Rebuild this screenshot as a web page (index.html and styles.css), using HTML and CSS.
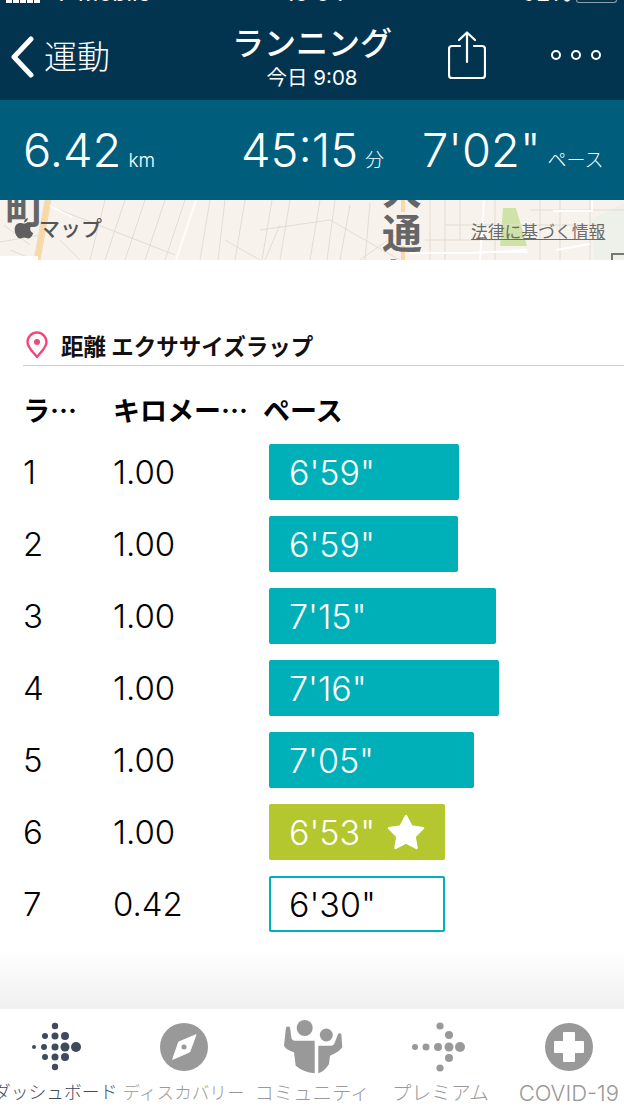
FILE: index.html
```html
<!DOCTYPE html>
<html lang="ja">
<head>
<meta charset="utf-8">
<title>ランニング</title>
<link rel="stylesheet" href="styles.css">
</head>
<body>
<div class="app">
  <header class="top">
    <div class="status">
      <i class="st-signal"></i>
      <span class="st-carrier">T-Mobile</span>
      <span class="st-time">10:04</span>
      <span class="st-batt">92%</span>
      <i class="st-cell"></i>
    </div>
    <div class="nav">
      <div class="back">
        <svg class="chev" width="26" height="44" viewBox="0 0 26 44"><path d="M23 4 L6 22 L23 40" fill="none" stroke="#fff" stroke-width="5" stroke-linecap="round" stroke-linejoin="round"/></svg>
        <span class="back-label">運動</span>
      </div>
      <div class="title">
        <div class="title-main">ランニング</div>
        <div class="title-sub">今日 9:08</div>
      </div>
      <svg class="share" width="38" height="50" viewBox="0 0 38 50"><path d="M12 15 H4 Q1 15 1 18 V44 Q1 47 4 47 H34 Q37 47 37 44 V18 Q37 15 34 15 H26 M19 31 V2 M11 9 L19 1.500 L27 9" fill="none" stroke="#fff" stroke-width="2.200" stroke-linecap="round" stroke-linejoin="round"/></svg>
      <svg class="more" width="52" height="12" viewBox="0 0 52 12"><circle cx="6" cy="6" r="4" fill="none" stroke="#fff" stroke-width="2"/><circle cx="26" cy="6" r="4" fill="none" stroke="#fff" stroke-width="2"/><circle cx="46" cy="6" r="4" fill="none" stroke="#fff" stroke-width="2"/></svg>
    </div>
  </header>

  <section class="stats">
    <div class="stat stat-dist"><span class="num">6.42</span><span class="unit">km</span></div>
    <div class="stat stat-time"><span class="num">45:15</span><span class="unit">分</span></div>
    <div class="stat stat-pace"><span class="num">7'02"</span><span class="unit">ペース</span></div>
  </section>

  <div class="map">
    <svg width="624" height="60" viewBox="0 0 624 60">
      <rect width="624" height="60" fill="#f7f3ec"/>
      <path d="M595 60 L590 20 L624 3 V60 Z" fill="#eef0ea"/>
      <path d="M503 8 H516 L527 46 H500 Z" fill="#cfe3a8"/>
      <g fill="none" stroke="#e2ddd3" stroke-width="1">
        <path d="M0 42 L40 35 M60 10 L175 55 M105 0 L90 60 M125 0 L105 60 M145 0 L125 60 M165 0 L145 60 M185 0 L165 60"/>
        <path d="M210 0 L200 60 M225 0 L218 60 M245 0 L235 60 M260 30 L330 20 L400 60 M272 0 L262 60 M290 0 L280 60 M320 0 L310 60 M335 0 L327 60 M350 5 L340 60 M370 3 L365 60 M395 35 L360 60"/>
        <path d="M430 0 V60 M445 0 V60 M460 0 V40 M495 0 V60 M540 0 V60 M560 0 V60 M590 0 V60 M530 10 H624 M445 25 H600 M425 40 H500"/>
        <path d="M4 25 L30 45 M10 50 L35 60 M60 40 L80 60 M225 40 L260 60 M280 25 L265 60"/>
      </g>
      <path d="M45 0 L34 60 M51 0 L40 60" stroke="#eadbc0" stroke-width="1" fill="none"/>
      <path d="M48 0 L37 60" stroke="#fad8a3" stroke-width="5" fill="none"/>
      <path d="M403 0 V12 M403 46 V60" stroke="#fad8a3" stroke-width="4" fill="none"/>
      <g fill="none" stroke="#fff" stroke-width="1.800">
        <path d="M196 0 L176 60"/>
        <path d="M50 6 L72 17"/>
        <path d="M484 0 L480 60"/>
        <path d="M410 53 H470 L527 50 M480 52 H528"/>
        <path d="M553 11 H592 V0 M556 50 L590 44"/>
      </g>
      <path d="M0 60 V56 H38 V60 Z" fill="#fff"/>
      <path d="M612 60 V54 H624" fill="none" stroke="#777" stroke-width="2"/>
    </svg>
    <span class="map-town">町</span>
    <span class="map-road-a">大</span>
    <span class="map-road-b">通</span>
    <span class="map-road-c">り</span>
    <div class="map-brand">
      <svg width="20" height="22" viewBox="0 0 18 20"><path d="M12.500 1 C12.600 3 11 5 9 5 C9 3 10.500 1.300 12.500 1 Z M9 6 C10.500 6 11.500 5 13 5 C14.800 5 16 6 16.800 7.200 C13.500 9 14.200 13.500 17.500 14.500 C16.500 17 15 19.500 13 19.500 C11.500 19.500 11 18.700 9.300 18.700 C7.600 18.700 7 19.500 5.500 19.500 C3 19.500 .5 15 .5 11.500 C.5 8 2.800 5.500 5.300 5.500 C6.800 5.500 7.800 6 9 6 Z" fill="#5f5f5f"/></svg>
      <span>マップ</span>
    </div>
    <span class="map-legal">法律に基づく情報</span>
  </div>

  <main class="content">
    <h2 class="sec-head">
      <svg class="pin" width="24" height="28" viewBox="0 0 24 28"><path d="M12 26 C8 21 2.500 16.500 2.500 11 A9.500 9.500 0 0 1 21.500 11 C21.500 16.500 16 21 12 26 Z" fill="none" stroke="#f0487a" stroke-width="2.400" stroke-linejoin="round"/><circle cx="12" cy="11" r="3" fill="#f0487a"/></svg>
      <span>距離 エクササイズラップ</span>
    </h2>
    <div class="laps">
      <div class="row row-head"><span class="c1">ラ…</span><span class="c2">キロメー…</span><span class="c3">ペース</span></div>
      <div class="row"><span class="c1">1</span><span class="c2">1.00</span><div class="bar" style="width:190px">6'59"</div></div>
      <div class="row"><span class="c1">2</span><span class="c2">1.00</span><div class="bar" style="width:189px">6'59"</div></div>
      <div class="row"><span class="c1">3</span><span class="c2">1.00</span><div class="bar" style="width:227px">7'15"</div></div>
      <div class="row"><span class="c1">4</span><span class="c2">1.00</span><div class="bar" style="width:230px">7'16"</div></div>
      <div class="row"><span class="c1">5</span><span class="c2">1.00</span><div class="bar" style="width:205px">7'05"</div></div>
      <div class="row"><span class="c1">6</span><span class="c2">1.00</span><div class="bar bar-best" style="width:176px"><span>6'53"</span><svg class="star" width="40" height="38" viewBox="0 0 40 38"><path d="M20 3 L25.500 13.500 L37 15.200 L28.500 23.500 L30.500 35 L20 29.500 L9.500 35 L11.500 23.500 L3 15.200 L14.500 13.500 Z" fill="#fff" stroke="#fff" stroke-width="2.500" stroke-linejoin="round"/></svg></div></div>
      <div class="row"><span class="c1">7</span><span class="c2">0.42</span><div class="bar bar-part" style="width:176px">6'30"</div></div>
    </div>
    <div class="fade"></div>
  </main>

  <nav class="tabs">
    <div class="tab tab-on">
      <svg class="tab-icon" width="60" height="54" viewBox="-5 0 60 54" fill="#3f4a5c">
        <circle cx="25" cy="6" r="3.200"/><circle cx="15" cy="16" r="3"/><circle cx="25" cy="16" r="3.500"/><circle cx="35" cy="16" r="4"/><circle cx="4" cy="27" r="2"/><circle cx="14" cy="27" r="3"/><circle cx="25" cy="27" r="3.500"/><circle cx="35" cy="27" r="4.500"/><circle cx="46" cy="27" r="5"/><circle cx="15" cy="37" r="3"/><circle cx="25" cy="37" r="3.500"/><circle cx="35" cy="37" r="4"/><circle cx="25" cy="47" r="3.200"/>
      </svg>
      <span class="lbl-dash">ダッシュボード</span>
    </div>
    <div class="tab">
      <svg class="tab-icon" width="60" height="54" viewBox="0 0 60 54"><circle cx="30" cy="27" r="24" fill="#999"/><path d="M42 14.700 L24.700 22 L18.700 39.300 L35.700 32 Z" fill="#fff" stroke="#fff" stroke-width="1" stroke-linejoin="round"/><circle cx="30" cy="27" r="2.500" fill="#999"/></svg>
      <span class="lbl-disc">ディスカバリー</span>
    </div>
    <div class="tab">
      <svg class="tab-icon" width="62" height="54" viewBox="0 0 62 54" fill="#999">
        <circle cx="23.700" cy="8" r="8"/><circle cx="45.300" cy="15" r="6.500"/>
        <path d="M5 7.300 Q7 5.500 9 7.300 L10.300 17.300 Q10.800 20.700 14 20.700 H33.700 V53.300 Q22 52 14.700 45.700 L13 32.300 Q5 30 3 25.700 Z"/>
        <path d="M37.300 25.700 H50 Q53 25.700 54 22 L57 14 Q58.800 12.500 60.300 14 L61.300 27.300 Q57 33 49 35.700 L48 44 Q44 51 37.300 53.300 Z"/>
      </svg>
      <span class="lbl-comm">コミュニティ</span>
    </div>
    <div class="tab">
      <svg class="tab-icon" width="60" height="54" viewBox="1 0 60 54" fill="#999">
        <circle cx="31" cy="6" r="3.600"/><circle cx="40" cy="15" r="4"/><circle cx="6" cy="27" r="3"/><circle cx="17" cy="27" r="3.500"/><circle cx="29" cy="27" r="4"/><circle cx="40" cy="27" r="4.500"/><circle cx="51" cy="27" r="5"/><circle cx="40" cy="38" r="4"/><circle cx="31" cy="48" r="3.600"/>
      </svg>
      <span class="lbl-prem">プレミアム</span>
    </div>
    <div class="tab">
      <svg class="tab-icon" width="60" height="54" viewBox="0 0 60 54"><circle cx="30" cy="27" r="24" fill="#999"/><path d="M25 12 H35 Q36 12 36 13 V21 H44 Q45 21 45 22 V32 Q45 33 44 33 H36 V41 Q36 42 35 42 H25 Q24 42 24 41 V33 H16 Q15 33 15 32 V22 Q15 21 16 21 H24 V13 Q24 12 25 12 Z" fill="#fff"/></svg>
      <span class="lbl-covid">COVID-19</span>
    </div>
  </nav>
</div>
</body>
</html>
```

FILE: styles.css
```css
* { box-sizing: border-box; }
html, body { margin: 0; padding: 0; }
body {
  width: 624px;
  height: 1108px;
  overflow: hidden;
  background: #fff;
  color: #000;
  font-family: "Inter", "Noto Sans CJK JP", sans-serif;
}
.app { width: 624px; height: 1108px; display: flex; flex-direction: column; overflow: hidden; }

.top { height: 100px; background: #03344f; color: #fff; flex: none; }
.status {
  height: 3px;
  overflow: hidden;
  position: relative;
  font-size: 23px;
  line-height: 24px;
}
.status span { position: absolute; bottom: -2px; }
.st-signal { position: absolute; left: 6px; bottom: 0; width: 34px; height: 3px; background: repeating-linear-gradient(90deg, #fff 0 6px, transparent 6px 7px); }
.st-cell { position: absolute; left: 576px; bottom: 0; width: 41px; height: 3px; border: 1px solid #8aa0ad; border-top: 0; border-radius: 0 0 3px 3px; }
.st-carrier { left: 54px; }
.st-time { left: 285px; }
.st-batt { left: 522px; }

.nav { height: 97px; display: flex; align-items: flex-start; position: relative; }
.back { display: flex; align-items: center; margin: 32px 0 0 8px; width: 210px; height: 44px; }
.back-label { font-size: 33px; line-height: 44px; margin-left: 10px; font-weight: 300; }
.chev { flex: none; }
.title { width: 172px; margin-left: 8px; text-align: center; margin-top: 23px; }
.title-main { font-size: 32px; line-height: 36px; font-weight: 500; white-space: nowrap; }
.title-sub { font-size: 20.500px; line-height: 24px; margin-top: 4px; }
.share { margin: 28px 0 0 50px; flex: none; }
.more { margin: 46px 0 0 64px; flex: none; }

.stats { height: 100px; background: #005e7c; color: #fff; flex: none; display: flex; align-items: baseline; padding-top: 24px; }
.stat { display: flex; align-items: baseline; white-space: nowrap; }
.stat-dist { margin-left: 23px; width: 218px; }
.stat-time { width: 181px; }
.num { font-size: 47px; line-height: 52px; font-weight: 300; }
.unit { font-size: 19px; font-weight: 300; margin-left: 7px; }

.map { height: 60px; flex: none; position: relative; overflow: hidden; }
.map svg { display: block; }
.map-town, .map-road-a, .map-road-b, .map-road-c {
  position: absolute;
  font-family: "Noto Sans CJK JP", sans-serif;
  font-size: 40px;
  line-height: 40px;
  font-weight: 700;
  color: #666;
}
.map-town { left: 5px; top: -14px; }
.map-road-a { left: 382px; top: -33px; }
.map-road-b { left: 382px; top: 11px; }
.map-road-c { left: 382px; top: 55px; }
.map-brand { position: absolute; left: 14px; top: 16px; display: flex; align-items: center; font-size: 21px; line-height: 26px; color: #555; font-weight: 500; }
.map-brand svg { margin-top: -2px; margin-right: 5px; }
.map-legal { position: absolute; left: 471px; top: 21px; font-size: 16.800px; line-height: 22px; color: #6b6b6b; text-decoration: underline; white-space: nowrap; }

.content { flex: 1; position: relative; min-height: 0; }
.sec-head {
  margin: 70px 0 0 23px;
  height: 36px;
  padding-bottom: 6px;
  border-bottom: 1px solid #ccc;
  display: flex;
  align-items: center;
  font-size: 22.500px;
  font-weight: 700;
  color: #111;
}
.pin { flex: none; margin-left: 2px; margin-right: 12px; }
.laps { margin-top: 23px; }
.row { display: flex; align-items: center; height: 72px; padding-left: 23px; font-size: 33px; font-weight: 300; }
.row-head {
  height: 40px;
  margin-bottom: 7px;
  font-family: "Noto Sans CJK JP", sans-serif;
  font-size: 27px;
  font-weight: 700;
}
.c1 { width: 90px; flex: none; }
.c2 { width: 150px; flex: none; white-space: nowrap; }
.c3 { white-space: nowrap; }
.bar {
  height: 56px;
  margin-left: 6px;
  padding-left: 20px;
  display: flex;
  align-items: center;
  background: #00b0b9;
  color: #fff;
  border-radius: 2px;
  font-size: 34px;
}
.bar-best { background: #b5c72e; }
.bar-part { background: #fff; color: #000; border: 2px solid #00b0b9; padding-left: 18px; }
.star { margin-left: 11px; flex: none; }

.fade { position: absolute; left: 0; right: 0; bottom: 0; height: 60px; background: linear-gradient(#fff, #f0f0f0); }

.tabs { height: 99px; flex: none; background: #fff; display: flex; position: relative; margin-left: -9px; }
.tab { flex: 0 0 128.400px; display: flex; flex-direction: column; align-items: center; line-height: 22px; color: #999; font-weight: 300; white-space: nowrap; }
.tab-icon { margin-top: 11px; height: 54px; flex: none; }
.tab span { margin-top: 8px; }
.lbl-dash { font-size: 17.800px; }
.lbl-disc { font-size: 17.600px; }
.lbl-comm { font-size: 19.400px; }
.lbl-prem { font-size: 19.700px; }
.lbl-covid { font-size: 22px; }
.tab-on { color: #3f4a5c; }
```
